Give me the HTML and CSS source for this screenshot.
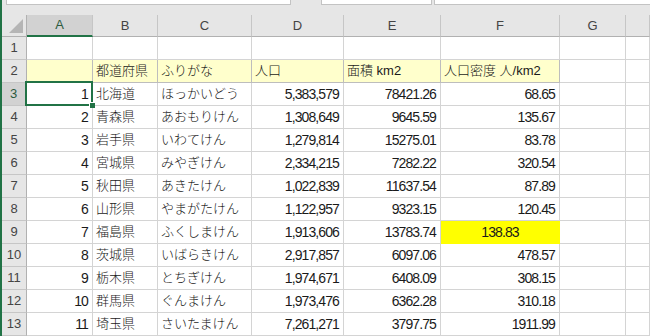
FILE: index.html
```html
<!DOCTYPE html>
<html lang="ja">
<head>
    <meta charset="UTF-8">
    <meta name="viewport" content="width=device-width, initial-scale=1.0">
    <title>都道府県 人口密度</title>
    <link rel="stylesheet" href="styles.css">
</head>
<body>
    <div class="window">
        <div class="bar-edge">
            <div class="field name-box"></div>
            <div class="field func-box"></div>
            <div class="field formula-box"></div>
        </div>
        <div class="spacer"></div>

        <div class="sheet">
            <!-- column headers -->
            <div class="corner">
                <svg width="14" height="14" viewBox="0 0 14 14"><polygon points="14,0 14,14 0,14" fill="#b5b5b5"/></svg>
            </div>
            <div class="col-head active">A</div>
            <div class="col-head">B</div>
            <div class="col-head">C</div>
            <div class="col-head">D</div>
            <div class="col-head">E</div>
            <div class="col-head">F</div>
            <div class="col-head">G</div>
            <div class="col-head"></div>

            <!-- row 1 -->
            <div class="row-head">1</div>
            <div class="cell"></div><div class="cell"></div><div class="cell"></div><div class="cell"></div>
            <div class="cell"></div><div class="cell"></div><div class="cell"></div><div class="cell"></div>

            <!-- row 2: titles -->
            <div class="row-head">2</div>
            <div class="cell title"></div>
            <div class="cell title text">都道府県</div>
            <div class="cell title text">ふりがな</div>
            <div class="cell title text">人口</div>
            <div class="cell title text">面積 km2</div>
            <div class="cell title text">人口密度 人/km2</div>
            <div class="cell"></div><div class="cell"></div>

            <div class="row-head active">3</div>
            <div class="cell num selected">1<div class="cursor"><div class="handle"></div></div></div>
            <div class="cell text">北海道</div>
            <div class="cell text">ほっかいどう</div>
            <div class="cell num">5,383,579</div>
            <div class="cell num">78421.26</div>
            <div class="cell num">68.65</div>
            <div class="cell"></div><div class="cell"></div>

            <div class="row-head">4</div>
            <div class="cell num">2</div>
            <div class="cell text">青森県</div>
            <div class="cell text">あおもりけん</div>
            <div class="cell num">1,308,649</div>
            <div class="cell num">9645.59</div>
            <div class="cell num">135.67</div>
            <div class="cell"></div><div class="cell"></div>

            <div class="row-head">5</div>
            <div class="cell num">3</div>
            <div class="cell text">岩手県</div>
            <div class="cell text">いわてけん</div>
            <div class="cell num">1,279,814</div>
            <div class="cell num">15275.01</div>
            <div class="cell num">83.78</div>
            <div class="cell"></div><div class="cell"></div>

            <div class="row-head">6</div>
            <div class="cell num">4</div>
            <div class="cell text">宮城県</div>
            <div class="cell text">みやぎけん</div>
            <div class="cell num">2,334,215</div>
            <div class="cell num">7282.22</div>
            <div class="cell num">320.54</div>
            <div class="cell"></div><div class="cell"></div>

            <div class="row-head">7</div>
            <div class="cell num">5</div>
            <div class="cell text">秋田県</div>
            <div class="cell text">あきたけん</div>
            <div class="cell num">1,022,839</div>
            <div class="cell num">11637.54</div>
            <div class="cell num">87.89</div>
            <div class="cell"></div><div class="cell"></div>

            <div class="row-head">8</div>
            <div class="cell num">6</div>
            <div class="cell text">山形県</div>
            <div class="cell text">やまがたけん</div>
            <div class="cell num">1,122,957</div>
            <div class="cell num">9323.15</div>
            <div class="cell num">120.45</div>
            <div class="cell"></div><div class="cell"></div>

            <div class="row-head">9</div>
            <div class="cell num">7</div>
            <div class="cell text">福島県</div>
            <div class="cell text">ふくしまけん</div>
            <div class="cell num">1,913,606</div>
            <div class="cell num">13783.74</div>
            <div class="cell mark">138.83</div>
            <div class="cell"></div><div class="cell"></div>

            <div class="row-head">10</div>
            <div class="cell num">8</div>
            <div class="cell text">茨城県</div>
            <div class="cell text">いばらきけん</div>
            <div class="cell num">2,917,857</div>
            <div class="cell num">6097.06</div>
            <div class="cell num">478.57</div>
            <div class="cell"></div><div class="cell"></div>

            <div class="row-head">11</div>
            <div class="cell num">9</div>
            <div class="cell text">栃木県</div>
            <div class="cell text">とちぎけん</div>
            <div class="cell num">1,974,671</div>
            <div class="cell num">6408.09</div>
            <div class="cell num">308.15</div>
            <div class="cell"></div><div class="cell"></div>

            <div class="row-head">12</div>
            <div class="cell num">10</div>
            <div class="cell text">群馬県</div>
            <div class="cell text">ぐんまけん</div>
            <div class="cell num">1,973,476</div>
            <div class="cell num">6362.28</div>
            <div class="cell num">310.18</div>
            <div class="cell"></div><div class="cell"></div>

            <div class="row-head">13</div>
            <div class="cell num">11</div>
            <div class="cell text">埼玉県</div>
            <div class="cell text">さいたまけん</div>
            <div class="cell num">7,261,271</div>
            <div class="cell num">3797.75</div>
            <div class="cell num">1911.99</div>
            <div class="cell"></div><div class="cell"></div>
        </div>
    </div>
</body>
</html>
```

FILE: styles.css
```css
* {
    box-sizing: border-box;
}
body {
    margin: 0;
    font-family: "Liberation Sans", Arial, sans-serif;
    background-color: #fff;
}
.window {
    height: 336px;
    overflow: hidden;
    border-left: 2px solid #217346;
    background-color: #e6e6e6;
}
.bar-edge {
    display: flex;
    height: 5px;
    padding-left: 4px;
}
.field {
    background: white;
    border: 1px solid #c3c3c3;
    border-top: none;
}
.name-box {
    width: 285px;
    margin-right: 30px;
}
.func-box {
    width: 111px;
    margin-right: 2px;
}
.formula-box {
    flex: 1;
    border-right: none;
}
.spacer {
    height: 10px;
}
.sheet {
    display: grid;
    grid-template-columns: 25px 66px 65px 94px 92px 97px 119px 66px 1fr;
    grid-template-rows: 22px;
    grid-auto-rows: 23px;
}
.corner {
    display: flex;
    justify-content: flex-end;
    align-items: flex-end;
    padding: 0 3px 3px 0;
    border-right: 1px solid #b1b1b1;
    border-bottom: 1px solid #b1b1b1;
}
.corner svg {
    display: block;
}
.col-head {
    border-right: 1px solid #c6c6c6;
    border-bottom: 1px solid #b1b1b1;
    text-align: center;
    line-height: 21px;
    font-size: 13px;
    color: #444;
}
.col-head.active {
    background-color: #d2d2d2;
    border-bottom: 2px solid #217346;
    line-height: 20px;
    color: #2c5a3e;
}
.row-head {
    border-right: 1px solid #b1b1b1;
    border-bottom: 1px solid #c6c6c6;
    text-align: center;
    line-height: 22px;
    font-size: 13px;
    color: #444;
}
.row-head.active {
    background-color: #d2d2d2;
    border-right: 2px solid #217346;
    color: #2c5a3e;
}
.cell {
    background-color: #fff;
    border-right: 1px solid #d4d4d4;
    border-bottom: 1px solid #d4d4d4;
    padding: 0 3px;
    line-height: 22px;
    font-size: 14px;
    font-family: "Liberation Sans", "Noto Sans CJK JP", sans-serif;
    letter-spacing: -0.9px;
    color: #1a1a1a;
    white-space: nowrap;
    overflow: hidden;
}
.text {
    font-size: 13px;
    font-weight: 300;
    letter-spacing: 0;
}
.num {
    text-align: right;
    padding-right: 4px;
}
.title {
    background-color: #ffffcc;
    border-color: #bdbdbd;
}
.mark {
    background-color: #ffff00;
    border-color: #ffff00;
    text-align: center;
}
.selected {
    position: relative;
    overflow: visible;
}
.cursor {
    position: absolute;
    left: -2px;
    top: -2px;
    right: -1px;
    bottom: -1px;
    border: 2px solid #217346;
}
.handle {
    position: absolute;
    right: -4px;
    bottom: -4px;
    width: 6px;
    height: 6px;
    background-color: #217346;
    border: 1px solid #fff;
    border-width: 1px 0 0 1px;
}
```
